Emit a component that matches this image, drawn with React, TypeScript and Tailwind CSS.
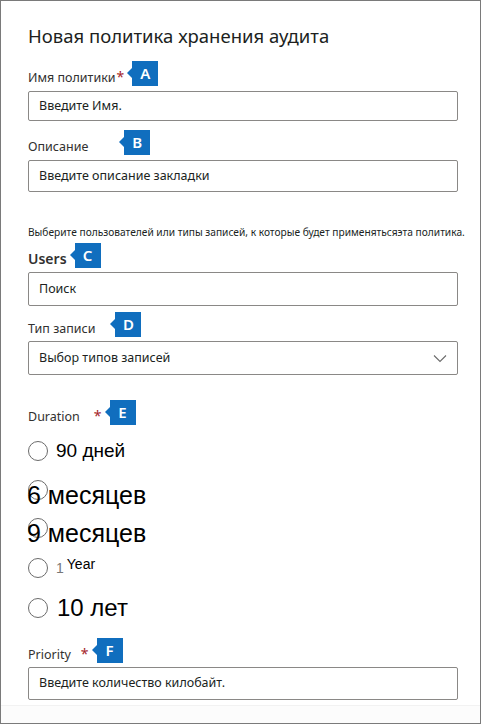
import React from 'react'

const font = { fontFamily: '"Noto Sans", "Liberation Sans", sans-serif' }
const arial = { fontFamily: '"Liberation Sans", Arial, sans-serif' }

function Badge({ letter }: { letter: string }) {
  return (
    <span className="relative ml-[8px] flex h-[25px] w-[26px] items-center justify-center bg-[#106ebe] text-[15px] font-semibold text-white">
      <span className="absolute left-[-5px] top-[7px] h-0 w-0 border-y-[5px] border-r-[5px] border-y-transparent border-r-[#106ebe]" />
      {letter}
    </span>
  )
}

function Star({ gap = 'ml-[1px]' }: { gap?: string }) {
  return <span className={`${gap} mb-[-1px] text-[14px] leading-[20px] text-[#a4262c]`}>*</span>
}

function Label({ text, strong = false }: { text: string; strong?: boolean }) {
  return strong ? (
    <span className="mb-[-2px] text-[14px] font-semibold leading-[22px] text-[#323130]">{text}</span>
  ) : (
    <span className="mb-[-2px] text-[12.5px] leading-[20px] text-[#323130]">{text}</span>
  )
}

function Field({ text, h = 'h-[30px]' }: { text: string; h?: string }) {
  return (
    <div className={`${h} flex w-[430px] items-center rounded-[2px] border border-[#8a8886] pl-[10px] text-[12.5px] text-[#201f1e]`}>
      {text}
    </div>
  )
}

function Circle() {
  return <span className="block h-[20px] w-[20px] shrink-0 rounded-full border-[1.5px] border-[#6b6b6b] bg-white" />
}

export default function App() {
  return (
    <div className="h-[725px] w-[481px] overflow-hidden bg-white" style={font}>
      <div className="flex h-[724px] w-[481px] flex-col border border-[#7a7a7a] pl-[27px]">
        <h1 className="mt-[22px] text-[18.5px] leading-[26px] text-[#201f1e]">Новая политика хранения аудита</h1>

        <div className="mt-[12px] flex h-[25px] items-end">
          <Label text="Имя политики" />
          <Star />
          <Badge letter="A" />
        </div>
        <div className="mt-[5px]">
          <Field text="Введите Имя." />
        </div>

        <div className="mt-[9px] flex h-[25px] items-end">
          <Label text="Описание" />
          <span className="w-[28px]" />
          <Badge letter="B" />
        </div>
        <div className="mt-[5px]">
          <Field text="Введите описание закладки" h="h-[32px]" />
        </div>

        <p className="mt-[33px] text-[10.2px] leading-[14px] text-[#201f1e]">
          Выберите пользователей или типы записей, к которые будет применятьсяэта политика.
        </p>

        <div className="mt-[4px] flex h-[25px] items-end">
          <Label text="Users" strong />
          <Badge letter="C" />
        </div>
        <div className="mt-[4px]">
          <Field text="Поиск" h="h-[34px]" />
        </div>

        <div className="mt-[6px] flex h-[25px] items-end">
          <Label text="Тип записи" />
          <span className="w-[12px]" />
          <Badge letter="D" />
        </div>
        <div className="mt-[4px] flex h-[34px] w-[430px] items-center justify-between rounded-[2px] border border-[#8a8886] pl-[10px] pr-[10px] text-[12.5px] text-[#201f1e]">
          <span>Выбор типов записей</span>
          <svg width="14" height="9" viewBox="0 0 14 9" fill="none">
            <path d="M1 1.5 L7 7.5 L13 1.5" stroke="#6b6b6b" strokeWidth="1.1" />
          </svg>
        </div>

        <div className="mt-[25px] flex h-[25px] items-end">
          <Label text="Duration" />
          <Star gap="ml-[14px]" />
          <Badge letter="E" />
        </div>

        <div className="mt-[16px] flex h-[20px] items-center" style={arial}>
          <Circle />
          <span className="ml-[8px] text-[19px] text-black">90 дней</span>
        </div>
        <div className="mt-[19px] flex h-[20px] items-center" style={arial}>
          <Circle />
          <span className="ml-[-21px] mt-[10px] text-[25px] leading-[26px] text-black">6 месяцев</span>
        </div>
        <div className="mt-[18px] flex h-[20px] items-center" style={arial}>
          <Circle />
          <span className="ml-[-21px] mt-[10px] text-[25px] leading-[26px] text-black">9 месяцев</span>
        </div>
        <div className="mt-[20px] flex h-[20px] items-center" style={arial}>
          <Circle />
          <span className="ml-[8px] text-[14px] text-[#777]">1</span>
          <span className="ml-[3px] mt-[-8px] text-[14px] leading-[16px] text-black">Year</span>
        </div>
        <div className="mt-[20px] flex h-[20px] items-center" style={arial}>
          <Circle />
          <span className="ml-[9px] text-[24px] text-black">10 лет</span>
        </div>

        <div className="mt-[20px] flex h-[25px] items-end">
          <Label text="Priority" />
          <Star gap="ml-[10px]" />
          <Badge letter="F" />
        </div>
        <div className="mt-[4px]">
          <Field text="Введите количество килобайт." h="h-[33px]" />
        </div>
        <div className="mt-[5px] ml-[-27px] flex-1 border-t border-[#f2f2f2] bg-[#fcfcfc]" />
      </div>
    </div>
  )
}
